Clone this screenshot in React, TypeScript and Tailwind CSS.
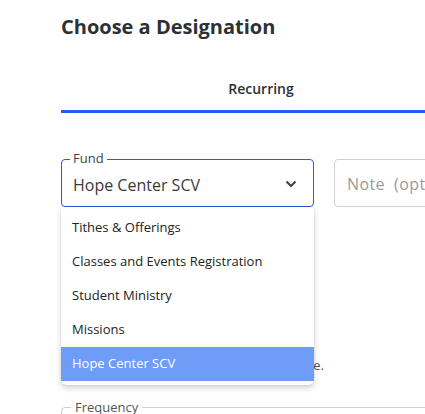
import React from 'react';

const funds = [
  'Tithes & Offerings',
  'Classes and Events Registration',
  'Student Ministry',
  'Missions',
  'Hope Center SCV'
];

export default function App() {
  return (
    <div
      className="h-[414px] w-[425px] overflow-hidden bg-white"
      style={{ fontFamily: '"Open Sans", "Noto Sans", sans-serif' }}
    >
      <div className="w-[560px] pl-[61px] pt-[13px]">
        <h1 className="text-[20px] font-bold leading-[28px] text-[#2d3136]">
          Choose a Designation
        </h1>

        {/* Tabs */}
        <div className="mt-[29px] w-[400px]">
          <div className="flex h-[36px] items-center justify-center text-[14px] font-semibold text-[#2d3136]">
            Recurring
          </div>
          <div className="mt-[4px] h-[3px] w-full bg-[#2659f1]" />
        </div>

        {/* Fund + note */}
        <div className="mt-[46px] flex gap-[20px]">
          <div className="relative w-[253px]">
            <div className="flex h-[48px] items-center justify-between rounded-[4px] border border-[#2a5bd7] pl-[11px] pr-[16px]">
              <span className="absolute left-[9px] top-[-9px] bg-white px-[3px] text-[13px] leading-[16px] text-[#444]">
                Fund
              </span>
              <span className="pt-[3px] text-[16px] text-[#3a3a3a]">Hope Center SCV</span>
              <svg width="12" height="8" viewBox="0 0 12 8" className="mt-[2px] text-[#444]">
                <path d="M1.5 1.5 L6 6 L10.5 1.5" fill="none" stroke="currentColor" strokeWidth="2.2" />
              </svg>
            </div>

            {/* Dropdown */}
            <div className="absolute left-0 top-[48px] z-10 w-[253px] rounded-b-[5px] bg-white py-[4px] shadow-[0_3px_6px_rgba(0,0,0,0.18),0_0_1px_rgba(0,0,0,0.25)]">
              {funds.map((f) => (
                <div
                  key={f}
                  className={
                    f === 'Hope Center SCV'
                      ? 'flex h-[34px] items-center bg-[#6e9cf7] px-[11px] text-[13px] text-white'
                      : 'flex h-[34px] items-center px-[11px] text-[13px] text-[#222]'
                  }
                >
                  {f}
                </div>
              ))}
            </div>
          </div>

          <div className="flex h-[48px] w-[200px] items-center whitespace-pre rounded-[4px] border border-[#d0d0d0] px-[12px] pt-[2px] text-[16px] tracking-[0.4px] text-[#9a9a9a]">
            {'Note  (optional)'}
          </div>
        </div>

        <p className="mt-[149px] w-[263px] text-right text-[13px] leading-[18px] text-[#555]">
          Gifts support the selected fund purpose.
        </p>

        <div className="relative mt-[33px] h-[40px] w-[420px] rounded-[4px] border border-[#cfcfcf]">
          <span className="absolute left-[9px] top-[-10px] bg-white px-[4px] text-[13px] leading-[18px] text-[#555]">
            Frequency
          </span>
        </div>
      </div>
    </div>
  );
}
